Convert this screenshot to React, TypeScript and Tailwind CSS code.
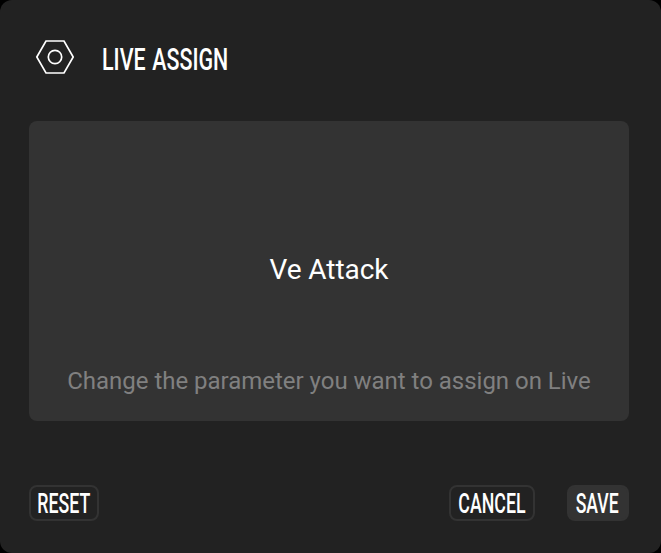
import React from "react";

function HexNutIcon() {
  return (
    <svg className="h-[36px] w-[40px] shrink-0" viewBox="0 0 40 36" fill="none" stroke="#ffffff" strokeWidth="1.7">
      <path d="M1.8 18 L11 2 H29 L38.2 18 L29 34 H11 Z" />
      <circle cx="20" cy="18" r="6.7" />
    </svg>
  );
}

function Button({ label, className, textClass }: { label: string; className: string; textClass: string }) {
  return (
    <button className={`flex h-9 items-center justify-center rounded-lg border-2 border-[#333333] text-[28px] leading-none font-medium ${className}`}>
      <span className={`relative right-[0.5px] top-px block shrink-0 whitespace-nowrap ${textClass}`}>{label}</span>
    </button>
  );
}

export default function App() {
  return (
    <div className="h-[553px] w-[661px] overflow-hidden bg-black font-['Roboto',sans-serif] text-white">
      <main className="flex h-full w-full flex-col rounded-[12px] bg-[#222222] pl-[29px] pr-8 pt-[39px]">
        <header className="flex h-9 items-center pl-[6px]">
          <HexNutIcon />
          <h1 className="ml-[27px] mt-1.5 origin-left scale-x-[0.68] whitespace-nowrap text-[31.5px] leading-none font-medium [word-spacing:2px]">LIVE ASSIGN</h1>
        </header>
        <section className="mt-[46px] flex h-[300px] flex-col items-center rounded-lg bg-[#333333]">
          <p className="mt-[132px] text-[28px] leading-[33px] tracking-[-0.05px]">Ve Attack</p>
          <p className="mt-[81px] whitespace-nowrap text-[24px] leading-7 tracking-[-0.02px] text-[#808080]">Change the parameter you want to assign on Live</p>
        </section>
        <footer className="mt-16 flex">
          <Button label="RESET" className="w-[70px]" textClass="scale-x-[0.635]" />
          <Button label="CANCEL" className="ml-auto w-[86px]" textClass="scale-x-[0.635]" />
          <Button label="SAVE" className="ml-8 w-[62px] bg-[#333333]" textClass="scale-x-[0.63]" />
        </footer>
      </main>
    </div>
  );
}
